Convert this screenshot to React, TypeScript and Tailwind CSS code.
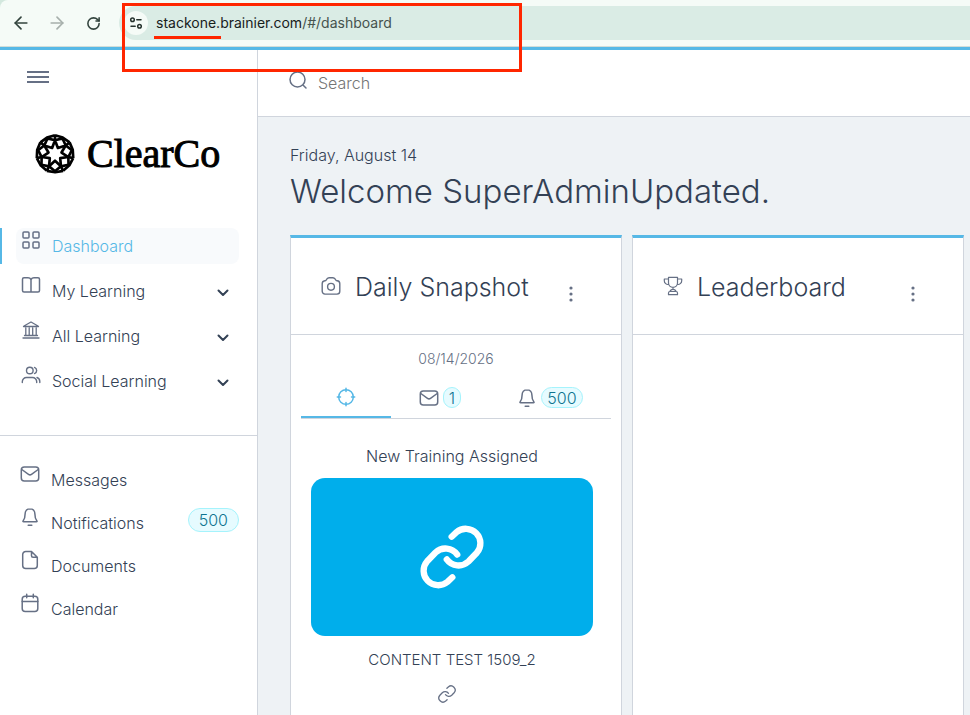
import React from "react";
import { ArrowLeft, ArrowRight, RotateCw } from "lucide-react";

type IconProps = { className?: string; children: React.ReactNode; weight?: number };

function Icon({ className = "size-5", children, weight = 1.5 }: IconProps) {
  return (
    <svg
      viewBox="0 0 20 20"
      className={`shrink-0 ${className}`}
      fill="none"
      stroke="currentColor"
      strokeWidth={weight}
      strokeLinecap="round"
      strokeLinejoin="round"
      aria-hidden="true"
    >
      {children}
    </svg>
  );
}

const GridIcon = () => (
  <Icon>
    <rect x="2" y="2" width="6" height="6" rx="1" />
    <rect x="12" y="2" width="6" height="6" rx="1" />
    <rect x="2" y="12" width="6" height="6" rx="1" />
    <rect x="12" y="12" width="6" height="6" rx="1" />
  </Icon>
);

const BookIcon = () => (
  <Icon>
    <path d="M10 4.500c-.7-1.200-1.700-1.700-3-1.700H3A1.500 1.500 0 0 0 1.500 4.300v11.200A1.500 1.500 0 0 0 3 17h14a1.500 1.500 0 0 0 1.500-1.500V4.300A1.500 1.500 0 0 0 17 2.800h-4c-1.300 0-2.300.5-3 1.700V17" />
  </Icon>
);

const BankIcon = () => (
  <Icon weight={1.3}>
    <path d="M2.500 6.500h15M3 6l7-4 7 4M4.800 8v7M8.200 8v7M11.700 8v7M15.200 8v7M3.500 15.500h13M2 18h16" />
  </Icon>
);

const UsersIcon = () => (
  <Icon weight={1.4}>
    <circle cx="8.800" cy="5.500" r="3.300" />
    <path d="M13.500 2.400a3.300 3.300 0 0 1 0 6.200M1.300 17.500v-.8a4.200 4.200 0 0 1 4.200-4.200h6a4.200 4.200 0 0 1 4.200 4.200v.8M16 12.500c1.800.5 2.800 1.900 2.800 4v1" />
  </Icon>
);

const MailIcon = () => (
  <Icon>
    <rect x="1.300" y="3" width="17.400" height="14" rx="3" />
    <path d="m1.800 5.500 6.700 4.800a2.500 2.500 0 0 0 3 0l6.700-4.800" />
  </Icon>
);

const BellIcon = () => (
  <Icon>
    <path d="M8.200 18.300h3.600M10 1.700c-3.100 0-4.900 2.400-4.900 5.300 0 4-.9 5.500-1.900 6.800-.5.600-.3 1 .4 1h12.800c.7 0 .9-.4.400-1-1-1.300-1.900-2.800-1.900-6.800 0-2.900-1.800-5.300-4.900-5.300Z" />
  </Icon>
);

const FileIcon = () => (
  <Icon>
    <path d="M11.500 1.500H5.700a3 3 0 0 0-3 3v11a3 3 0 0 0 3 3h8.600a3 3 0 0 0 3-3V7.300Zm0 0v4.300a1.500 1.500 0 0 0 1.500 1.500h4.300" />
  </Icon>
);

const CalendarIcon = () => (
  <Icon>
    <rect x="2.200" y="3.300" width="15.600" height="15.200" rx="3" />
    <path d="M2.200 8.500h15.600M6.700 1.300v3.500M13.300 1.300v3.500" />
  </Icon>
);

const CameraIcon = () => (
  <Icon weight={1.4}>
    <path d="M1.200 7.700c0-1.700 1-2.700 2.600-2.900.7-.1 1.100-.4 1.500-1C6 2.300 6.800 1.700 8 1.700h4c1.200 0 2 .6 2.700 2.100.4.600.8.900 1.500 1 1.600.2 2.600 1.200 2.600 2.900v7.600a2.800 2.800 0 0 1-2.800 2.800H4a2.800 2.800 0 0 1-2.800-2.800Z" />
    <circle cx="10" cy="10.800" r="3.400" />
  </Icon>
);

const TrophyIcon = () => (
  <Icon weight={1.2}>
    <path d="M5.500 1.300h9v5.500a4.500 4.500 0 0 1-9 0ZM5.500 3H1.300v1.700a3.700 3.700 0 0 0 4.500 3.700M14.500 3h4.200v1.700a3.700 3.700 0 0 1-4.500 3.700M10 11.300v2M7 15.500c.3-1.400 1.300-2.200 3-2.200s2.700.8 3 2.200M5.500 18.700v-1.700a1.500 1.500 0 0 1 1.500-1.500h6a1.500 1.500 0 0 1 1.500 1.500v1.700Z" />
  </Icon>
);

const TargetIcon = () => (
  <Icon>
    <circle cx="10" cy="10" r="7.300" />
    <path d="M10 1.300v3.200M10 15.500v3.200M1.300 10h3.200M15.500 10h3.200" />
  </Icon>
);

const SearchIcon = () => (
  <Icon>
    <circle cx="9.500" cy="9.500" r="7.500" />
    <path d="m15.200 15.200 2.800 2.800" />
  </Icon>
);

const LINK_HALF = "M9.900 4.200 11.300 2.900A4.150 4.150 0 0 1 17.100 8.800L14.700 11.300A4.150 4.150 0 0 1 8.500 10.700";

const LinkIcon = ({ className, weight }: { className?: string; weight?: number }) => (
  <Icon className={className} weight={weight}>
    <path d={LINK_HALF} />
    <path d={LINK_HALF} transform="rotate(180 10 10)" />
  </Icon>
);

const ChevronIcon = () => (
  <svg viewBox="0 0 12 8" className="h-2 w-3 shrink-0" fill="none" stroke="currentColor" strokeWidth="2" strokeLinecap="round" strokeLinejoin="round" aria-hidden="true">
    <path d="m1.500 1.500 4.500 4.500 4.500-4.500" />
  </svg>
);

const DotsIcon = () => (
  <svg viewBox="0 0 4 16" className="h-4 w-1" fill="currentColor" aria-hidden="true">
    <circle cx="2" cy="2" r="1.600" />
    <circle cx="2" cy="8" r="1.600" />
    <circle cx="2" cy="14" r="1.600" />
  </svg>
);

const SEGMENTS = [0, 1, 2, 3, 4, 5, 6];

/* Seven diamonds around a star, held in a rounded heptagon. */
function ClearCoMark() {
  return (
    <svg viewBox="-60 -60 120 120" className="size-10" fill="none" stroke="#000" strokeWidth="8" strokeLinejoin="round" aria-hidden="true">
      {SEGMENTS.map((i) => (
        <g key={i} transform={`rotate(${(i * 360) / 7})`}>
          <path d="M0-56 23.300-49.500 43.800-35M0-56V-41" />
          <g transform="rotate(25.714)">
            <path d="M0-52 17.800-37 0-20-17.800-37Z" />
          </g>
        </g>
      ))}
    </svg>
  );
}

type Item = { label: string; icon: React.ReactNode; active?: boolean; expandable?: boolean; badge?: string };

const primary: Item[] = [
  { label: "Dashboard", icon: <GridIcon />, active: true },
  { label: "My Learning", icon: <BookIcon />, expandable: true },
  { label: "All Learning", icon: <BankIcon />, expandable: true },
  { label: "Social Learning", icon: <UsersIcon />, expandable: true },
];

const secondary: Item[] = [
  { label: "Messages", icon: <MailIcon /> },
  { label: "Notifications", icon: <BellIcon />, badge: "500" },
  { label: "Documents", icon: <FileIcon /> },
  { label: "Calendar", icon: <CalendarIcon /> },
];

function NavRow({ item, inset }: { item: Item; inset: string }) {
  const tone = item.active ? "bg-[#f8fafc] text-[#56b8e6]" : "text-[#334155]";
  const body = (
    <>
      <span className="mt-0.5 self-start text-[#667085]">{item.icon}</span>
      <span className="grow text-left">{item.label}</span>
      {item.badge && (
        <span className="mt-[3px] flex h-6 items-center self-start rounded-full border border-[#a5f3fc] bg-[#e6fbff] px-2.5 text-[#0e7490]">
          {item.badge}
        </span>
      )}
      {item.expandable && (
        <span className="mt-1 mr-2.5">
          <ChevronIcon />
        </span>
      )}
    </>
  );
  return (
    <li className={item.active ? "border-l-2 border-[#56b8e6] pl-3.5" : "pl-4"}>
      {item.expandable ? (
        <button type="button" className={`flex h-9 w-full items-center rounded-lg ${inset} ${tone}`}>
          {body}
        </button>
      ) : (
        <a href="#" className={`flex h-9 items-center rounded-lg ${inset} ${tone}`}>
          {body}
        </a>
      )}
    </li>
  );
}

function Card({ title, icon, children }: { title: string; icon: React.ReactNode; children?: React.ReactNode }) {
  return (
    <section className="border-x border-t-3 border-x-[#d0d5dd] border-t-[#56b8e6] bg-white">
      <header className="flex h-[97px] items-center border-b border-[#d0d5dd] pr-12 pl-[30px] text-[#667085]">
        {icon}
        <h2 className="mt-0.5 ml-3.5 grow text-[25px] leading-8 text-[#334155]">{title}</h2>
        <button type="button" aria-label={`${title} options`} className="mt-4">
          <DotsIcon />
        </button>
      </header>
      {children}
    </section>
  );
}

const tabBadge = "flex h-[21px] items-center rounded-full border border-[#a5f3fc] bg-[#e6fbff] px-[5px] text-[#0e7490]";

export default function App() {
  return (
    <div className="relative flex min-h-screen flex-col overflow-hidden bg-white font-['Inter','Liberation_Sans',sans-serif] text-base font-light text-[#334155]">
      <div className="bg-[#d3e8de]">
        <div className="flex h-[47px] items-center rounded-tl-lg border-b border-[#d2ddd8] bg-[#f5fbf7] text-[#33443e]">
          <button type="button" aria-label="Back" className="ml-3 flex w-[18px] justify-center">
            <ArrowLeft className="size-5 shrink-0" strokeWidth={2} />
          </button>
          <button type="button" aria-label="Forward" disabled className="ml-[18px] flex w-[18px] justify-center text-[#a7b0ac]">
            <ArrowRight className="size-5 shrink-0" strokeWidth={2} />
          </button>
          <button type="button" aria-label="Reload" className="ml-[18px] flex w-[18px] justify-center">
            <RotateCw className="size-[15px]" strokeWidth={2.5} />
          </button>
          <div className="ml-[17px] flex h-[34px] grow items-center gap-2 rounded-l-full bg-[#daece5] pl-[5px]">
            <button type="button" aria-label="Site information" className="flex size-6 items-center justify-center rounded-full bg-[#f5fbf7] text-[#26332e]">
              <svg viewBox="0 0 14 14" className="size-3.5" fill="none" stroke="currentColor" strokeWidth="1.500" strokeLinecap="round" aria-hidden="true">
                <circle cx="3.500" cy="3.700" r="1.800" />
                <path d="M7.800 3.700H12M2 10.300h4.200" />
                <circle cx="10.500" cy="10.300" r="1.800" />
              </svg>
            </button>
            <a href="#" className="text-sm font-normal text-[#46534e]">
              <span className="text-[#17201c]">stackone.brainier.com</span>/#/dashboard
            </a>
          </div>
        </div>
      </div>

      <div className="flex grow border-t-3 border-[#56b8e6]">
        <aside className="w-[258px] shrink-0 border-r border-[#d0d5dd]">
          <button type="button" aria-label="Menu" className="mt-[21px] ml-[27px] flex w-[22px] flex-col gap-[3px]">
            <span className="h-0.5 w-full bg-[#667085]" />
            <span className="h-0.5 w-full bg-[#667085]" />
            <span className="h-0.5 w-full bg-[#667085]" />
          </button>
          <div className="mt-[51px] ml-[35px] flex h-10 items-center gap-3">
            <ClearCoMark />
            <span className="font-['Liberation_Serif',serif] text-[40px] leading-10 font-normal text-black [-webkit-text-stroke:1px_black]">ClearCo</span>
          </div>
          <nav aria-label="Main" className="mt-[54px]">
            <ul className="flex flex-col gap-[9px] pr-[18px]">
              {primary.map((item) => (
                <NavRow key={item.label} item={item} inset="gap-[11px] pl-[5px]" />
              ))}
            </ul>
            <ul className="mt-9 flex flex-col gap-[7px] border-t border-[#d0d5dd] pt-[26px] pr-[18px]">
              {secondary.map((item) => (
                <NavRow key={item.label} item={item} inset="gap-[11px] pl-1" />
              ))}
            </ul>
          </nav>
        </aside>

        <div className="flex min-w-0 grow flex-col">
          <label className="flex h-[67px] items-center gap-2.5 border-b border-[#d0d5dd] pl-[30px] text-[#667085]">
            <span className="mb-1.5">
              <SearchIcon />
            </span>
            <input type="search" aria-label="Search" placeholder="Search" className="min-w-0 grow bg-transparent outline-none placeholder:text-[#757575]" />
          </label>

          <main className="flex grow flex-col bg-[#eef2f5] pt-[26px] pr-1.5 pl-8">
            <p className="leading-6">Friday, August 14</p>
            <h1 className="mt-1 text-[33px] leading-10">Welcome SuperAdminUpdated.</h1>
            <div className="mt-6 grid grow grid-cols-2 gap-2.5">
              <Card title="Daily Snapshot" icon={<CameraIcon />}>
                <div className="flex flex-col px-2.5 text-center">
                  <p className="mt-3 text-sm leading-6 text-[#667085]">08/14/2026</p>
                  <div role="tablist" className="mt-1.5 grid h-[42px] grid-cols-[90fr_98fr_122fr] border-b border-[#d0d5dd] text-[#667085]">
                    <button type="button" role="tab" aria-selected="true" aria-label="Training" className="flex items-center justify-center border-b-2 border-[#56b8e6] text-[#56b8e6]">
                      <TargetIcon />
                    </button>
                    <button type="button" role="tab" aria-selected="false" aria-label="Messages" className="flex items-center justify-center gap-1">
                      <MailIcon />
                      <span className={tabBadge}>1</span>
                    </button>
                    <button type="button" role="tab" aria-selected="false" aria-label="Notifications" className="flex items-center justify-center gap-1">
                      <BellIcon />
                      <span className={tabBadge}>500</span>
                    </button>
                  </div>
                  <p className="mt-[25px] mr-2 leading-6">New Training Assigned</p>
                  <div className="mt-[10px] mr-[18px] ml-2.5 flex h-[158px] items-center justify-center rounded-[14px] bg-[#00aeeb] text-white">
                    <LinkIcon className="size-[70px]" weight={1.8} />
                  </div>
                  <p className="mt-3 mr-2 text-[15px] leading-6">CONTENT TEST 1509_2</p>
                  <div className="mt-3 mr-[18px] flex justify-center pb-2 text-[#667085]">
                    <LinkIcon weight={1.3} />
                  </div>
                </div>
              </Card>
              <Card title="Leaderboard" icon={<TrophyIcon />} />
            </div>
          </main>
        </div>
      </div>

      <div className="pointer-events-none absolute top-[3px] left-[122px] h-[69px] w-[400px] border-3 border-[#ff2600]">
        <div className="absolute top-[30px] left-[29px] h-[3px] w-[67px] bg-[#ff2600]" />
      </div>
    </div>
  );
}
